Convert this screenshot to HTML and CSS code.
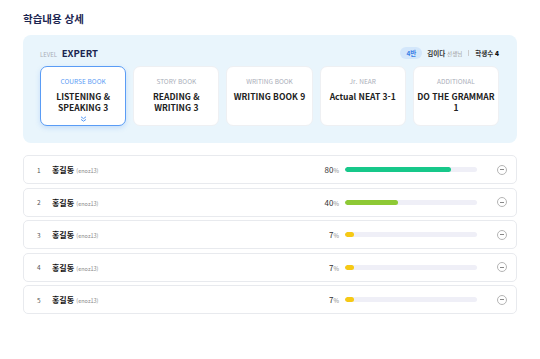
FILE: index.html
```html
<!DOCTYPE html>
<html lang="ko">
<head>
    <meta charset="UTF-8">
    <title>학습내용 상세</title>
    <link rel="stylesheet" href="styles.css">
</head>
<body>
    <div class="page">
        <h1 class="page-title">학습내용 상세</h1>

        <section class="level-panel">
            <div class="level-head">
                <div class="level-name"><span class="level-label">LEVEL</span> EXPERT</div>
                <div class="class-info">
                    <span class="class-badge">4반</span>
                    <span class="teacher">김이다 <small>선생님</small></span>
                    <span class="divider"></span>
                    <span class="count">학생수 <b>4</b></span>
                </div>
            </div>

            <div class="book-list">
                <div class="book-card active">
                    <div class="book-type">COURSE BOOK</div>
                    <div class="book-title">LISTENING &amp;<br>SPEAKING 3</div>
                    <svg class="chevron" width="7" height="6" viewBox="0 0 7 6">
                        <path d="M1 0.8 L3.5 2.6 L6 0.8 M1 3.4 L3.5 5.2 L6 3.4" fill="none" stroke="#5a9cf5" stroke-width="1"/>
                    </svg>
                </div>
                <div class="book-card">
                    <div class="book-type">STORY BOOK</div>
                    <div class="book-title">READING &amp;<br>WRITING 3</div>
                </div>
                <div class="book-card">
                    <div class="book-type">WRITING BOOK</div>
                    <div class="book-title">WRITING BOOK 9</div>
                </div>
                <div class="book-card">
                    <div class="book-type">Jr. NEAR</div>
                    <div class="book-title">Actual NEAT 3-1</div>
                </div>
                <div class="book-card">
                    <div class="book-type">ADDITIONAL</div>
                    <div class="book-title">DO THE GRAMMAR<br>1</div>
                </div>
            </div>
        </section>

        <div class="student-list">
            <div class="student-row">
                <span class="num">1</span>
                <span class="name">홍길동 <small>(enoz13)</small></span>
                <span class="percent">80<small>%</small></span>
                <div class="bar"><div class="fill green" style="width: 80%"></div></div>
                <span class="minus"></span>
            </div>
            <div class="student-row">
                <span class="num">2</span>
                <span class="name">홍길동 <small>(enoz13)</small></span>
                <span class="percent">40<small>%</small></span>
                <div class="bar"><div class="fill lime" style="width: 40%"></div></div>
                <span class="minus"></span>
            </div>
            <div class="student-row">
                <span class="num">3</span>
                <span class="name">홍길동 <small>(enoz13)</small></span>
                <span class="percent">7<small>%</small></span>
                <div class="bar"><div class="fill yellow" style="width: 7%"></div></div>
                <span class="minus"></span>
            </div>
            <div class="student-row">
                <span class="num">4</span>
                <span class="name">홍길동 <small>(enoz13)</small></span>
                <span class="percent">7<small>%</small></span>
                <div class="bar"><div class="fill yellow" style="width: 7%"></div></div>
                <span class="minus"></span>
            </div>
            <div class="student-row">
                <span class="num">5</span>
                <span class="name">홍길동 <small>(enoz13)</small></span>
                <span class="percent">7<small>%</small></span>
                <div class="bar"><div class="fill yellow" style="width: 7%"></div></div>
                <span class="minus"></span>
            </div>
        </div>
    </div>
</body>
</html>
```

FILE: styles.css
```css
:root {
    --navy: #1b2550;
    --text: #222;
    --muted: #a9adb8;
    --blue: #5a9cf5;
    --panel: #e9f5fc;
    --line: #e8eaee;
}

* {
    margin: 0;
    padding: 0;
    box-sizing: border-box;
}

body {
    font-family: "Noto Sans CJK KR", "Noto Sans", sans-serif;
    background: #fff;
    color: var(--text);
}

.page {
    width: 540px;
    padding: 11px 23px 0;
}

.page-title {
    font-size: 10.5px;
    font-weight: 700;
    color: var(--navy);
    line-height: 16px;
    margin-bottom: 8px;
}

.level-panel {
    background: var(--panel);
    border-radius: 8px;
    padding: 11px 18px 17px 17px;
}

.level-head {
    display: flex;
    justify-content: space-between;
    align-items: center;
    height: 14px;
    margin-bottom: 6px;
}

.level-name {
    font-size: 9.5px;
    font-weight: 700;
    color: var(--navy);
}

.level-label {
    font-size: 6px;
    font-weight: 400;
    color: var(--muted);
    margin-right: 2px;
}

.class-info {
    display: flex;
    align-items: center;
    font-size: 6.5px;
    font-weight: 700;
    color: #333;
}

.class-badge {
    background: #d3e7fb;
    color: #3a7fe6;
    border-radius: 6px;
    padding: 1px 6px;
    margin-right: 5px;
    line-height: 10px;
}

.teacher small {
    font-size: 5.5px;
    font-weight: 400;
    color: #999;
}

.divider {
    width: 1px;
    height: 6px;
    background: #ccc;
    margin: 0 6px;
}

.count b {
    color: #111;
}

.book-list {
    display: flex;
    gap: 7px;
}

.book-card {
    flex: 1;
    height: 60px;
    background: #fff;
    border: 1px solid #eef0f3;
    border-radius: 7px;
    text-align: center;
    padding-top: 10px;
}

.book-card.active {
    border-color: var(--blue);
    box-shadow: 0 2px 5px rgba(90, 156, 245, 0.25);
}

.book-type {
    font-size: 6.5px;
    color: var(--muted);
    line-height: 9px;
    margin-bottom: 5px;
}

.book-card.active .book-type {
    color: var(--blue);
}

.book-title {
    font-size: 8.5px;
    font-weight: 700;
    color: #222;
    line-height: 11px;
}

.chevron {
    display: block;
    margin: 3px auto 0;
}

.student-list {
    margin-top: 12px;
    display: flex;
    flex-direction: column;
    gap: 3.5px;
}

.student-row {
    display: flex;
    align-items: center;
    height: 29px;
    border: 1px solid var(--line);
    border-radius: 5px;
    padding: 0 9px 0 13px;
}

.num {
    width: 15px;
    font-size: 6.5px;
    color: #555;
}

.name {
    flex: 1;
    font-size: 8px;
    font-weight: 700;
    color: #111;
}

.name small {
    font-size: 5.5px;
    font-weight: 400;
    color: #888;
}

.percent {
    font-size: 8px;
    color: #333;
    margin-right: 6px;
}

.percent small {
    font-size: 6px;
    color: #888;
}

.bar {
    width: 132px;
    height: 5px;
    background: #efeff7;
    border-radius: 3px;
    overflow: hidden;
    margin-right: 20px;
}

.fill {
    height: 100%;
    border-radius: 3px;
}

.fill.green { background: #17c88a; }
.fill.lime { background: #8ec935; }
.fill.yellow { background: #f6c915; }

.minus {
    width: 10px;
    height: 10px;
    border: 1px solid #b5b5b5;
    border-radius: 50%;
    position: relative;
}

.minus::after {
    content: "";
    position: absolute;
    left: 2px;
    right: 2px;
    top: 3.5px;
    height: 1px;
    background: #888;
}
```
